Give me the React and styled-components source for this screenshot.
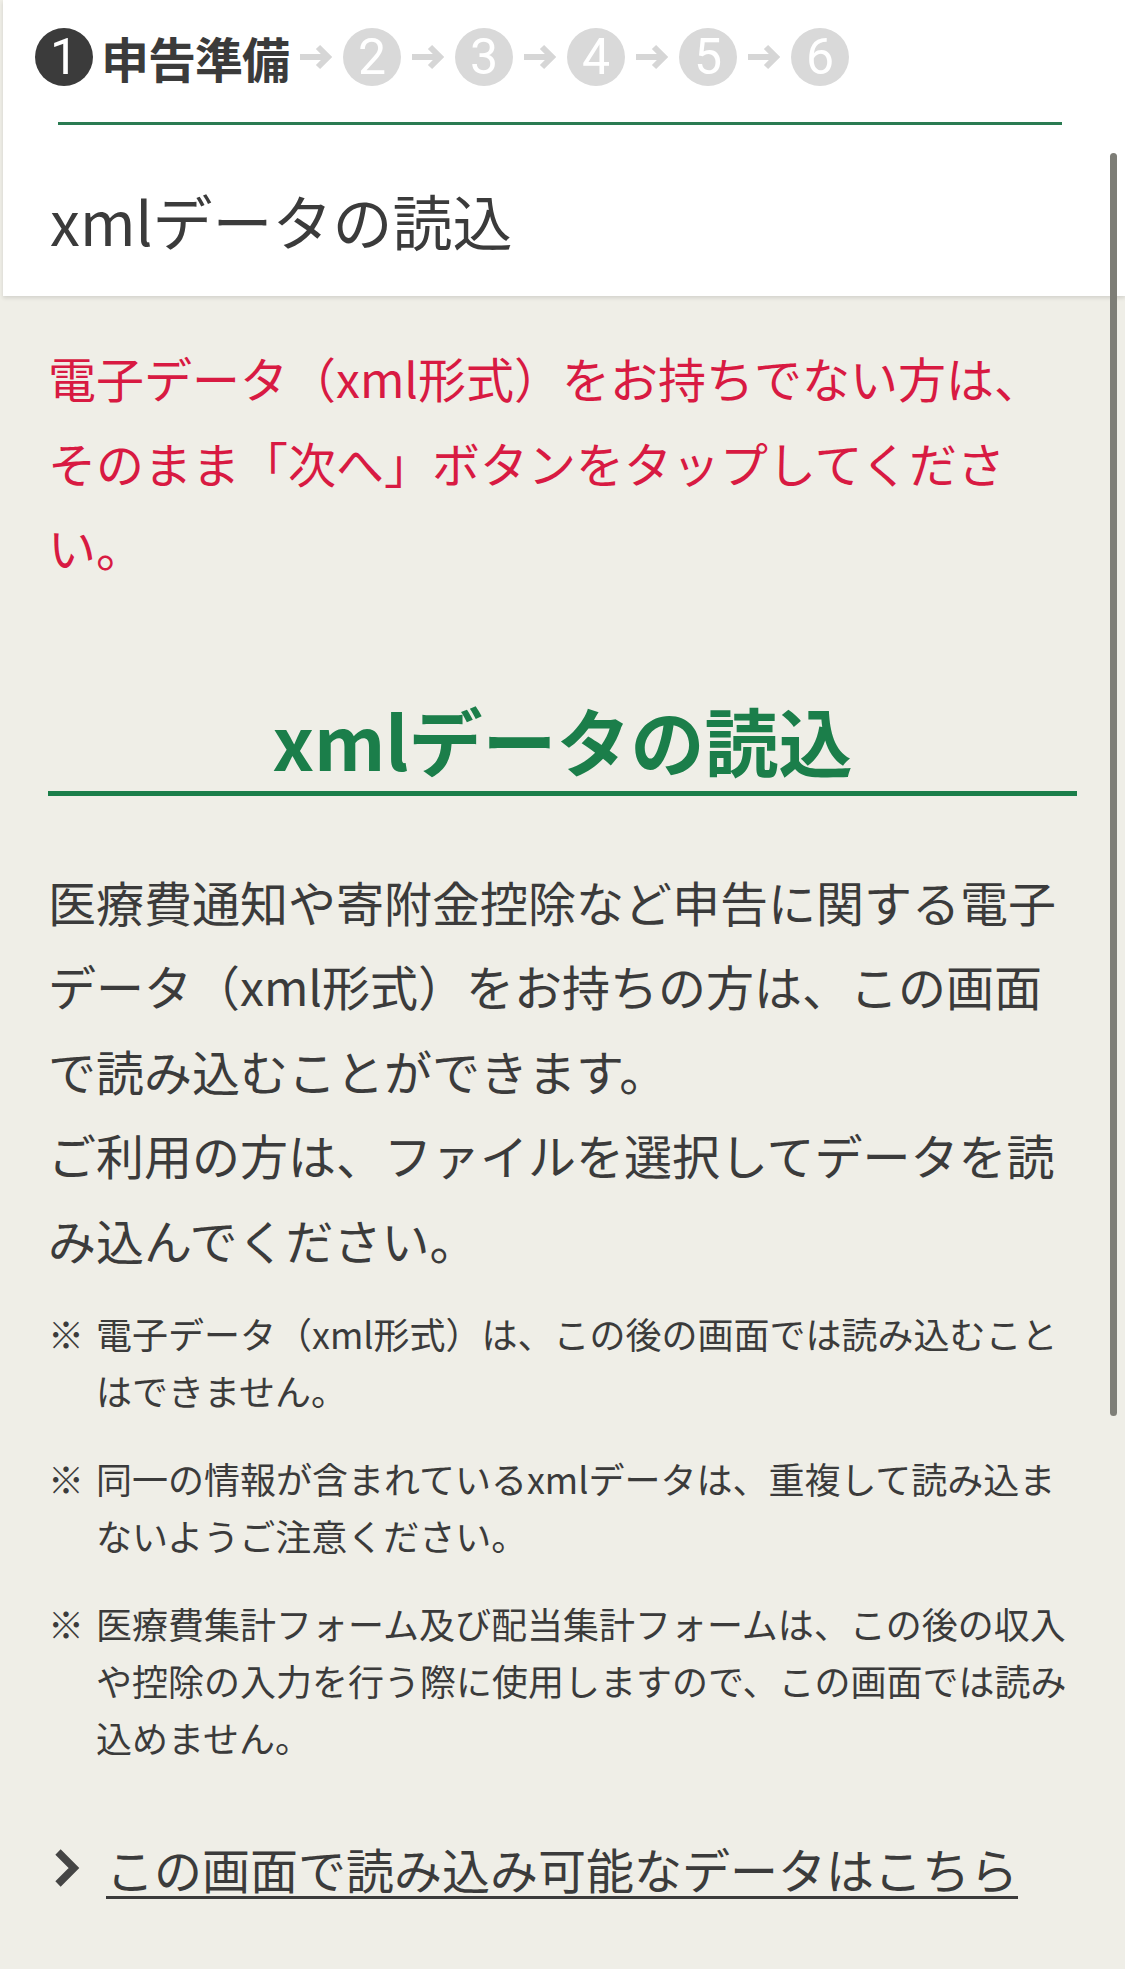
import React from "react";
import styled, { createGlobalStyle } from "styled-components";

const GlobalStyle = createGlobalStyle`
  html, body {
    margin: 0;
    padding: 0;
    background: #efeee7;
  }
  body {
    font-family: "Noto Sans CJK JP", "Noto Sans", sans-serif;
    color: #3b3b3b;
  }
  * { box-sizing: border-box; }
`;

const Page = styled.div`
  position: relative;
  min-height: 100vh;
  background: #efeee7;
`;

const Header = styled.header`
  margin-left: 3px;
  background: #ffffff;
  box-shadow: 0 2px 4px rgba(0, 0, 0, 0.12);
  padding: 28px 0 31px;
`;

const StepRow = styled.div`
  display: flex;
  align-items: center;
  height: 57px;
  padding-left: 32px;
`;

const StepCircle = styled.span`
  flex: 0 0 58px;
  width: 58px;
  height: 58px;
  border-radius: 50%;
  display: flex;
  align-items: center;
  justify-content: center;
  background: ${(p) => (p.$active ? "#3b3b3b" : "#d9d9d9")};
  color: #ffffff;
  font-family: Roboto, "Liberation Sans", sans-serif;
  font-size: 50px;
  font-weight: 400;
  line-height: 1;
`;

const StepLabel = styled.span`
  margin-left: 8px;
  font-size: 48px;
  font-weight: 700;
  line-height: 1;
  color: #3b3b3b;
  letter-spacing: -1px;
`;

const ArrowBox = styled.svg`
  flex: 0 0 34px;
  margin: 0 10px;
  display: block;
`;

const GreenRule = styled.div`
  height: 3px;
  background: #2a7b52;
  margin: 37px 63px 0 55px;
`;

const Title = styled.h1`
  margin: 50px 0 0 47px;
  font-size: 60px;
  font-weight: 400;
  line-height: 90px;
  color: #3b3b3b;
`;

const Main = styled.main`
  padding: 39px 48px 60px;
`;

const Notice = styled.p`
  margin: 0;
  color: #d81a42;
  font-size: 48px;
  line-height: 84.5px;
`;

const SectionHeading = styled.h2`
  margin: 100px 0 0;
  padding-bottom: 2px;
  text-align: center;
  color: #1b7e4a;
  font-size: 74px;
  font-weight: 700;
  line-height: 100px;
  border-bottom: 5px solid #1b7e4a;
`;

const BodyText = styled.p`
  margin: 63px 0 0;
  font-size: 48px;
  line-height: 84.5px;
  color: #3b3b3b;
`;

const NoteList = styled.ul`
  list-style: none;
  margin: 24px 0 0;
  padding: 0;
  display: flex;
  flex-direction: column;
  gap: 31px;
`;

const NoteItem = styled.li`
  display: flex;
  font-size: 36px;
  line-height: 57px;
  color: #3b3b3b;
`;

const NoteMark = styled.span`
  flex: 0 0 48px;
`;

const NoteText = styled.span`
  flex: 1;
`;

const LinkRow = styled.a`
  display: flex;
  align-items: center;
  gap: 24px;
  margin-top: 60px;
  height: 84px;
  color: #3b3b3b;
  text-decoration: none;
`;

const ChevronIcon = styled.svg`
  flex: 0 0 34px;
  display: block;
`;

const LinkText = styled.span`
  font-size: 48px;
  line-height: 84px;
  text-decoration: underline;
  text-decoration-thickness: 3px;
  text-underline-offset: 7px;
`;

const ScrollThumb = styled.div`
  position: absolute;
  top: 153px;
  right: 8px;
  width: 7px;
  height: 1263px;
  border-radius: 4px;
  background: #7e7e77;
`;

const Arrow = () => (
  <ArrowBox width="34" height="28" viewBox="0 0 34 28">
    <line x1="1" y1="14" x2="29" y2="14" stroke="#d6d6d6" strokeWidth="6" />
    <polyline
      points="19,4 29,14 19,24"
      fill="none"
      stroke="#d6d6d6"
      strokeWidth="6"
    />
  </ArrowBox>
);

const Chevron = () => (
  <ChevronIcon width="34" height="44" viewBox="0 0 34 44">
    <polyline
      points="10,6 26,22 10,38"
      fill="none"
      stroke="#454545"
      strokeWidth="7.5"
    />
  </ChevronIcon>
);

const notes = [
  "電子データ（xml形式）は、この後の画面では読み込むことはできません。",
  "同一の情報が含まれているxmlデータは、重複して読み込まないようご注意ください。",
  "医療費集計フォーム及び配当集計フォームは、この後の収入や控除の入力を行う際に使用しますので、この画面では読み込めません。",
];

export default function App() {
  return (
    <Page>
      <GlobalStyle />
      <Header>
        <StepRow>
          <StepCircle $active>1</StepCircle>
          <StepLabel>申告準備</StepLabel>
          {[2, 3, 4, 5, 6].map((n) => (
            <React.Fragment key={n}>
              <Arrow />
              <StepCircle>{n}</StepCircle>
            </React.Fragment>
          ))}
        </StepRow>
        <GreenRule />
        <Title>xmlデータの読込</Title>
      </Header>
      <Main>
        <Notice>
          電子データ（xml形式）をお持ちでない方は、そのまま「次へ」ボタンをタップしてください。
        </Notice>
        <SectionHeading>xmlデータの読込</SectionHeading>
        <BodyText>
          医療費通知や寄附金控除など申告に関する電子データ（xml形式）をお持ちの方は、この画面で読み込むことができます。
          <br />
          ご利用の方は、ファイルを選択してデータを読み込んでください。
        </BodyText>
        <NoteList>
          {notes.map((t) => (
            <NoteItem key={t}>
              <NoteMark>※</NoteMark>
              <NoteText>{t}</NoteText>
            </NoteItem>
          ))}
        </NoteList>
        <LinkRow href="#">
          <Chevron />
          <LinkText>この画面で読み込み可能なデータはこちら</LinkText>
        </LinkRow>
      </Main>
      <ScrollThumb />
    </Page>
  );
}
